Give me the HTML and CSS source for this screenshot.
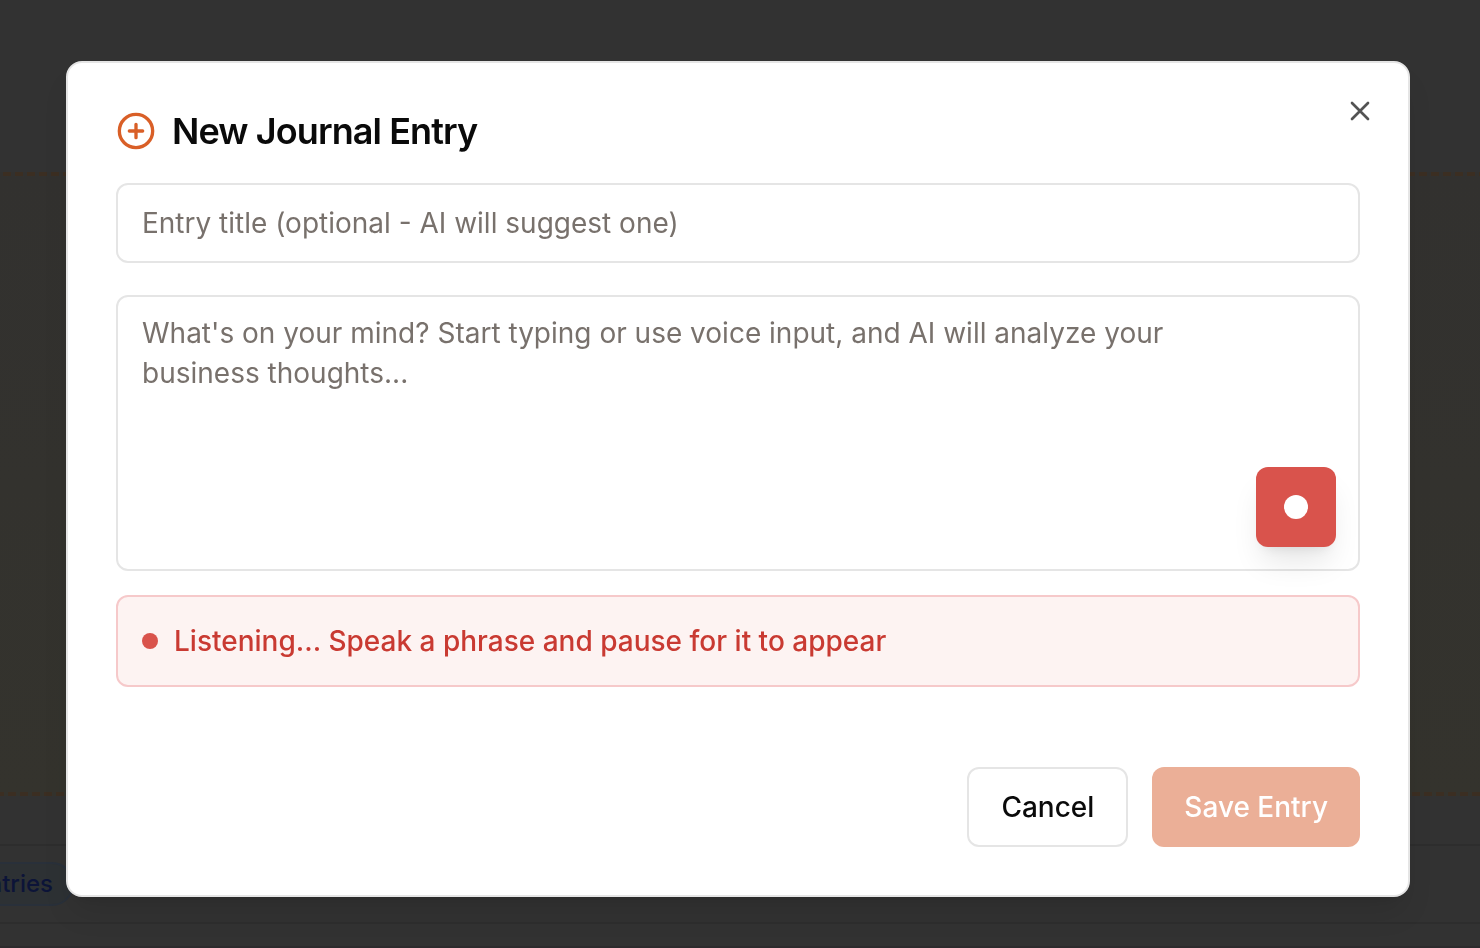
FILE: index.html
```html
<!DOCTYPE html>
<html lang="en">
<head>
<meta charset="utf-8">
<title>New Journal Entry</title>
<link rel="stylesheet" href="styles.css">
</head>
<body>
<div class="page">
  <div class="page-top"></div>
  <section class="prompt-card">
    <div class="dashes dashes-top"></div>
    <div class="dashes dashes-bottom"></div>
  </section>
  <div class="page-gap"></div>
  <div class="list-row"><span class="pill">entries</span></div>
  <div class="list-end"></div>
</div>
<div class="overlay">
  <div class="dialog" role="dialog" aria-labelledby="dialog-title">
    <header class="dialog-header">
      <svg class="title-icon" viewBox="0 0 24 24" fill="none" stroke="currentColor" stroke-width="2" stroke-linecap="round" stroke-linejoin="round"><circle cx="12" cy="12" r="10"/><path d="M8 12h8M12 8v8"/></svg>
      <h2 class="dialog-title" id="dialog-title">New Journal Entry</h2>
    </header>
    <input class="field title-field" type="text" placeholder="Entry title (optional - AI will suggest one)">
    <div class="entry">
      <textarea class="field entry-field" placeholder="What's on your mind? Start typing or use voice input, and AI will analyze your business thoughts..."></textarea>
      <button class="record" type="button" aria-label="Stop recording"><span class="record-dot"></span></button>
    </div>
    <div class="status"><span class="status-dot"></span><span>Listening... Speak a phrase and pause for it to appear</span></div>
    <footer class="actions">
      <button class="button cancel" type="button">Cancel</button>
      <button class="button save" type="button">Save Entry</button>
    </footer>
    <button class="close" type="button" aria-label="Close">
      <svg class="close-icon" viewBox="0 0 24 24" fill="none" stroke="currentColor" stroke-width="2" stroke-linecap="round"><path d="M18 6 6 18M6 6l12 12"/></svg>
    </button>
  </div>
</div>
</body>
</html>
```
FILE: styles.css
```css
* { box-sizing: border-box; }

body {
  margin: 0;
  height: 948px;
  overflow: hidden;
  background: #323232;
  font-family: Inter, "Liberation Sans", sans-serif;
  font-size: 28px;
  line-height: 40px;
}

.page {
  display: flex;
  flex-direction: column;
  height: 948px;
}

.page-top { height: 172px; }

.prompt-card {
  display: flex;
  flex-direction: column;
  justify-content: space-between;
  height: 624px;
  background: linear-gradient(#32312f, #34332d);
}

.dashes {
  height: 4px;
  background: repeating-linear-gradient(90deg, #3b2e22 0 8px, transparent 8px 12.1px);
}

.dashes-top { margin-left: 3px; }
.dashes-bottom { margin-left: -4px; }

.page-gap { height: 48px; }

.list-row {
  display: flex;
  align-items: center;
  height: 80px;
  border-top: 2px solid #2d2d2d;
  border-bottom: 2px solid #2d2d2d;
}

.pill {
  display: flex;
  align-items: center;
  justify-content: flex-end;
  width: 94px;
  height: 44px;
  margin-left: -20px;
  padding-right: 19px;
  border: 2px solid #29303a;
  border-radius: 22px;
  background: #2d3134;
  color: #0c1438;
  font-size: 24px;
  font-weight: 500;
  line-height: 32px;
}

.list-end {
  height: 24px;
  border-bottom: 2px solid #2d2b2d;
}

.overlay {
  position: fixed;
  inset: 0;
  display: flex;
  justify-content: center;
  align-items: flex-start;
  padding: 61px 70px 0 66px;
}

.dialog {
  position: relative;
  display: flex;
  flex-direction: column;
  width: 1344px;
  height: 836px;
  padding: 48px;
  border: 2px solid #e5e5e5;
  border-radius: 16px;
  background: #fff;
  box-shadow: 0 20px 30px -6px rgba(0, 0, 0, .1), 0 8px 12px -8px rgba(0, 0, 0, .1);
}

.dialog-header {
  display: flex;
  align-items: center;
  gap: 16px;
  height: 40px;
  margin-bottom: 32px;
}

.title-icon {
  width: 40px;
  height: 40px;
  color: #d95f27;
}

.dialog-title {
  margin: 0;
  color: #0a0a0a;
  font-size: 36px;
  font-weight: 600;
  line-height: 36px;
  letter-spacing: -.9px;
}

.field {
  display: block;
  width: 100%;
  border: 2px solid #e5e5e5;
  border-radius: 12px;
  outline: none;
  background: #fff;
  font: inherit;
}

.field::placeholder {
  color: #78716c;
  opacity: 1;
}

.title-field {
  height: 80px;
  margin-bottom: 32px;
  padding: 0 24px;
}

.entry {
  position: relative;
  height: 276px;
  margin-bottom: 24px;
}

.entry-field {
  height: 276px;
  padding: 16px 112px 16px 24px;
  resize: none;
}

.record {
  position: absolute;
  right: 24px;
  bottom: 24px;
  display: grid;
  place-items: center;
  width: 80px;
  height: 80px;
  padding: 0;
  border: 0;
  border-radius: 12px;
  background: #d9534c;
  box-shadow: 0 20px 30px -6px rgba(0, 0, 0, .1), 0 8px 12px -8px rgba(0, 0, 0, .1);
}

.record-dot {
  width: 24px;
  height: 24px;
  border-radius: 50%;
  background: #fff;
}

.status {
  display: flex;
  align-items: center;
  gap: 16px;
  height: 92px;
  padding: 0 24px;
  border: 2px solid #f6c9ca;
  border-radius: 12px;
  background: #fdf3f2;
  color: #c93a32;
  font-weight: 500;
}

.status-dot {
  width: 16px;
  height: 16px;
  border-radius: 50%;
  background: #d9534c;
}

.actions {
  display: flex;
  justify-content: flex-end;
  gap: 24px;
  margin-top: 80px;
}

.button {
  height: 80px;
  padding: 0 32px;
  border: 0;
  border-radius: 12px;
  font: inherit;
  font-weight: 500;
}

.cancel {
  border: 2px solid #e5e5e5;
  background: #fff;
  color: #0a0a0a;
}

.save {
  background: #ebaf97;
  color: #fff;
}

.close {
  position: absolute;
  top: 32px;
  right: 32px;
  padding: 0;
  border: 0;
  background: none;
  color: #535353;
  line-height: 0;
}

.close-icon {
  width: 32px;
  height: 32px;
}
```
